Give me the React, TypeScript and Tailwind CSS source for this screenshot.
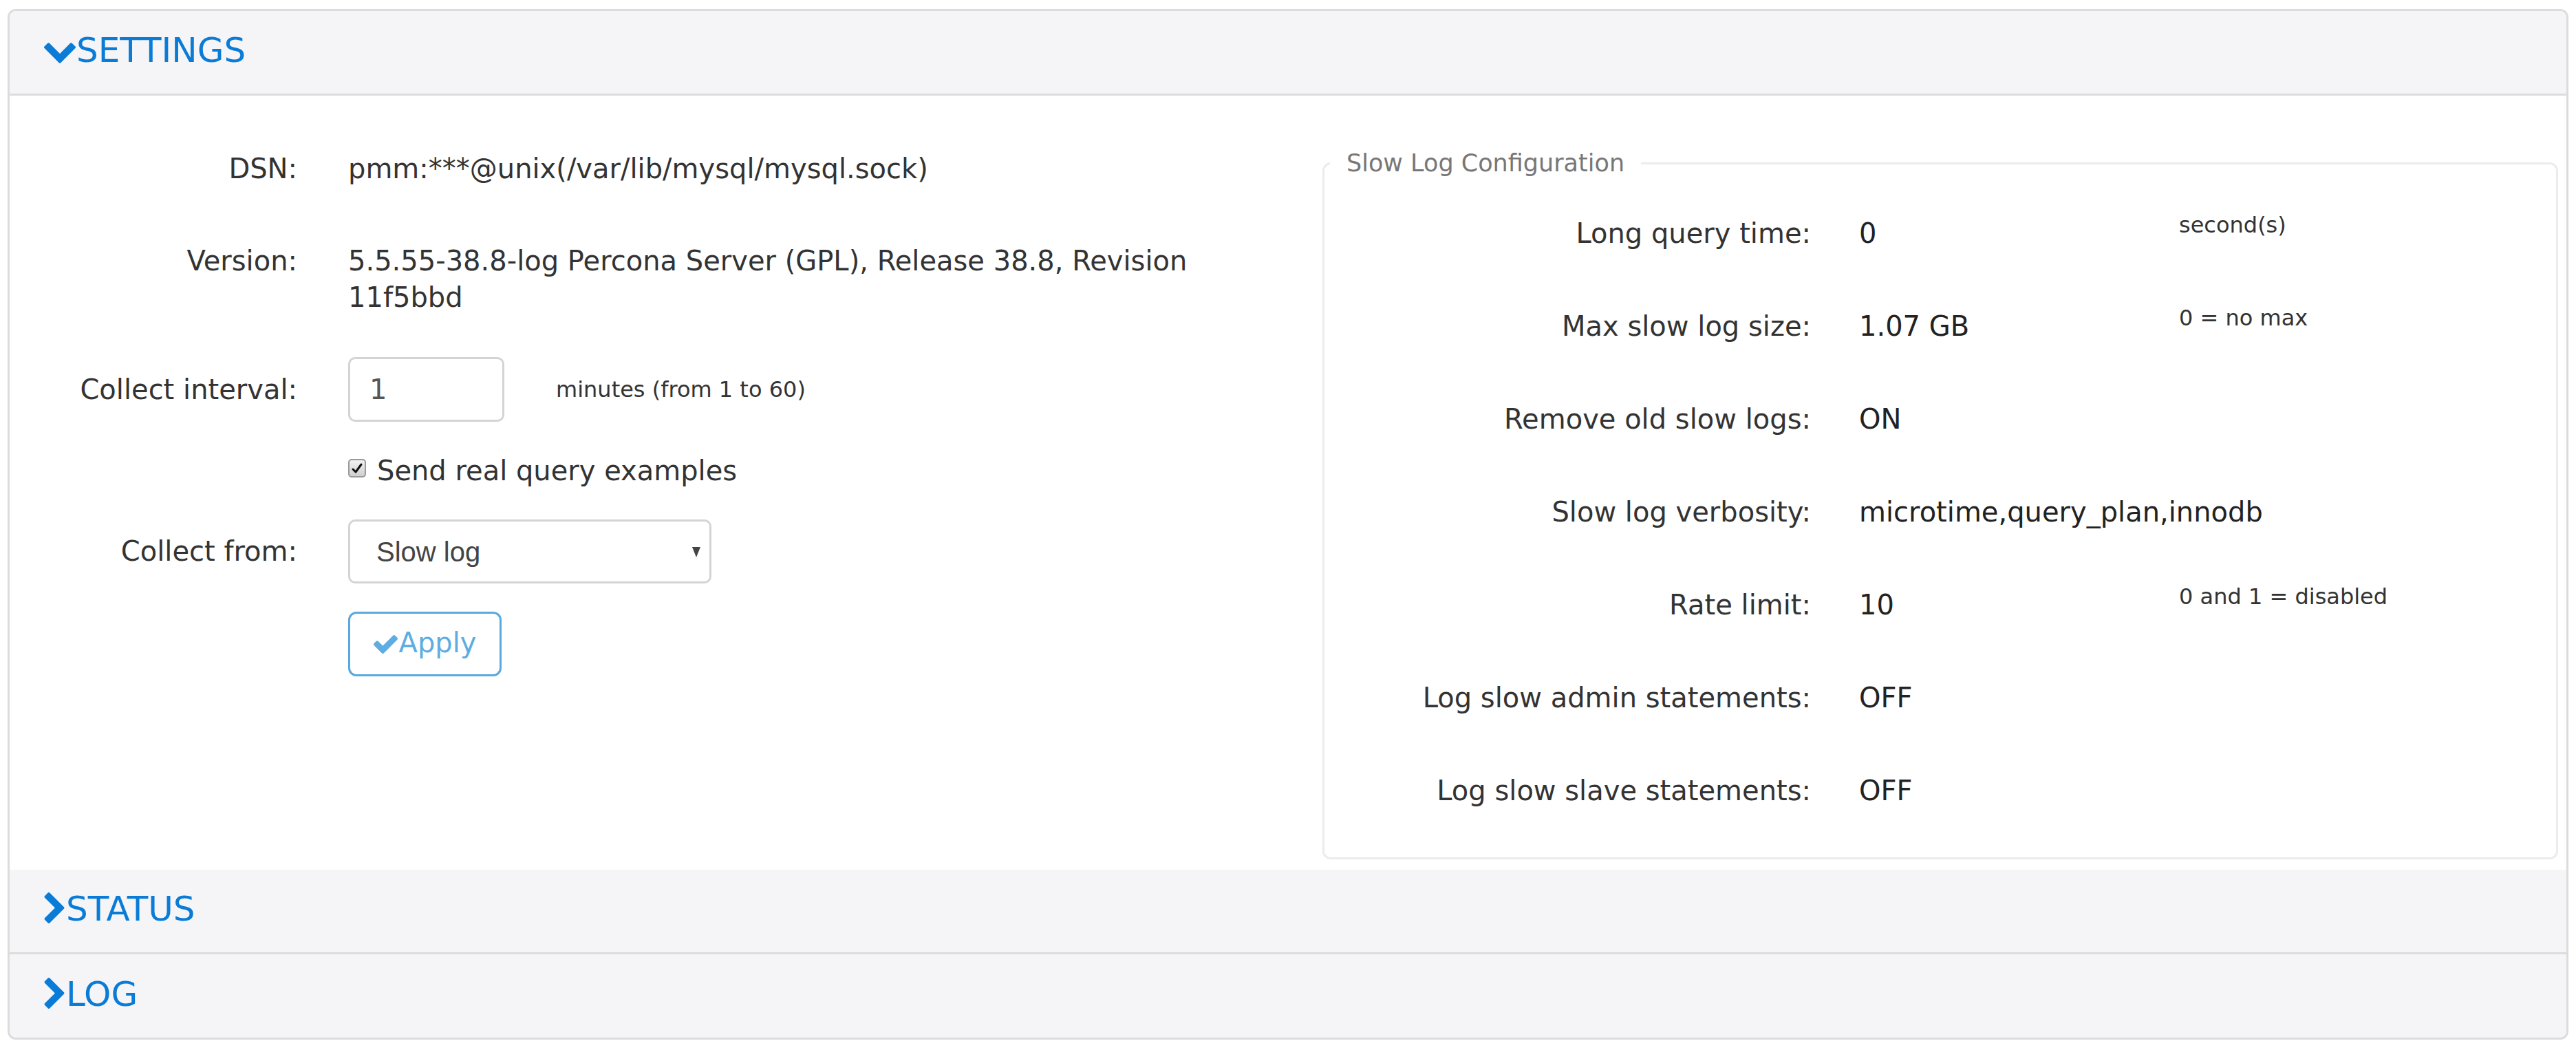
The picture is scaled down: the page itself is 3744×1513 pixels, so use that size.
import React from 'react';

interface SlowLogRow {
  label: string;
  value: string;
  hint?: string;
}

const slowLogRows: SlowLogRow[] = [
  { label: 'Long query time:', value: '0', hint: 'second(s)' },
  { label: 'Max slow log size:', value: '1.07 GB', hint: '0 = no max' },
  { label: 'Remove old slow logs:', value: 'ON' },
  { label: 'Slow log verbosity:', value: 'microtime,query_plan,innodb' },
  { label: 'Rate limit:', value: '10', hint: '0 and 1 = disabled' },
  { label: 'Log slow admin statements:', value: 'OFF' },
  { label: 'Log slow slave statements:', value: 'OFF' },
];

// font awesome 4 glyphs, cropped to their bounds
const ChevronDown = () => (
  <svg viewBox="90 533 1612 1035" className="w-[46px] h-[30px] fill-[#0a7bd6] mt-[2px]">
    <path d="M1683 808l-742 741q-19 19-45 19t-45-19l-742-741q-19-19-19-45.5t19-45.5l166-165q19-19 45-19t45 19l531 531 531-531q19-19 45-19t45 19l166 165q19 19 19 45.5t-19 45.5z" />
  </svg>
);

const ChevronRight = () => (
  <svg viewBox="346 26 1036 1612" className="w-[30px] h-[45px] fill-[#0a7bd6] mb-[9px]">
    <path d="M1363 877l-742 742q-19 19-45 19t-45-19l-166-166q-19-19-19-45t19-45l531-531-531-531q-19-19-19-45t19-45l166-166q19-19 45-19t45 19l742 742q19 19 19 45t-19 45z" />
  </svg>
);

const CheckIcon = () => (
  <svg viewBox="121 334 1550 1188" className="w-[35px] h-[27px] fill-[#5dade2]">
    <path d="M1671 566q0 40-28 68l-724 724-136 136q-28 28-68 28t-68-28l-136-136-362-362q-28-28-28-68t28-68l136-136q28-28 68-28t68 28l294 295 656-657q28-28 68-28t68 28l136 136q28 28 28 68z" />
  </svg>
);

const PanelHeading: React.FC<{ title: string; open?: boolean; last?: boolean }> = ({ title, open, last }) => (
  <div
    className={`flex items-center bg-[#f5f5f7] pl-[50px] ${
      last ? 'h-[121px]' : 'h-[123px] border-b-[3px] border-[#dcdcdc]'
    }`}
  >
    {open ? <ChevronDown /> : <ChevronRight />}
    <span className={`text-[50px] leading-[58px] text-[#0a7bd6] mb-[6px] ${open ? 'ml-[1px]' : 'ml-[2px]'}`}>
      {title}
    </span>
  </div>
);

const LeftColumn = () => (
  <div className="flex-1 min-w-0 flex flex-col pt-[80px] text-[40px]">
    {/* DSN */}
    <div className="flex items-start">
      <div className="w-[418px] shrink-0 text-right leading-[53px]">DSN:</div>
      <div className="ml-[74px] leading-[53px]">pmm:***@unix(/var/lib/mysql/mysql.sock)</div>
    </div>

    {/* Version */}
    <div className="flex items-start mt-[81px]">
      <div className="w-[418px] shrink-0 text-right leading-[53px]">Version:</div>
      <div className="ml-[74px] w-[1300px] leading-[53px]">
        5.5.55-38.8-log Percona Server (GPL), Release 38.8, Revision 11f5bbd
      </div>
    </div>

    {/* Collect interval */}
    <div className="flex items-center mt-[60px]">
      <div className="w-[418px] shrink-0 text-right leading-[53px]">Collect interval:</div>
      <div className="ml-[74px] w-[227px] h-[94px] flex items-center pl-[28px] border-[3px] border-[#d4d4d4] rounded-[10px] text-[#555]">
        1
      </div>
      <div className="ml-[75px] text-[32px] leading-[37px]">minutes (from 1 to 60)</div>
    </div>

    {/* Send real query examples */}
    <div className="flex items-center mt-[45px] ml-[492px]">
      <span className="w-[26px] h-[27px] -mt-[8px] flex items-center justify-center rounded-[5px] border-2 border-[#9a9a9a] bg-gradient-to-b from-[#f2f2f2] to-[#cfcfcf]">
        <svg viewBox="0 0 16 16" className="w-[16px] h-[16px]">
          <path d="M2 9 L6 13 L14 2" fill="none" stroke="#111" strokeWidth="3" strokeLinecap="round" strokeLinejoin="round" />
        </svg>
      </span>
      <span className="ml-[16px] leading-[53px]">Send real query examples</span>
    </div>

    {/* Collect from */}
    <div className="flex items-center mt-[44px]">
      <div className="w-[418px] shrink-0 text-right leading-[53px]">Collect from:</div>
      <div className="ml-[74px] w-[528px] h-[93px] flex items-center justify-between pl-[38px] pr-[12px] border-[3px] border-[#d4d4d4] rounded-[10px] font-['Liberation_Sans',Arial,sans-serif] text-[#444]">
        <span>Slow log</span>
        <svg viewBox="0 0 14 16" className="w-[14px] h-[16px] fill-[#444]">
          <path d="M1 1 L13 1 L7 16 Z" />
        </svg>
      </div>
    </div>

    {/* Apply */}
    <div className="flex mt-[41px] ml-[492px]">
      <button className="w-[223px] h-[94px] flex items-center justify-center gap-[2px] border-[3px] border-[#5aa8df] rounded-[12px] bg-white text-[#5dade2]">
        <CheckIcon />
        <span className="leading-[53px] mb-[4px]">Apply</span>
      </button>
    </div>
  </div>
);

const SlowLogFieldset = () => (
  <fieldset className="w-[1796px] shrink-0 self-start mt-[78px] mr-[12px] min-w-0 p-0 border-[3px] border-[#ececec] rounded-[12px]">
    <legend className="ml-[8px] px-[24px] text-[35px] leading-[40px] text-[#777]">Slow Log Configuration</legend>
    <div className="flex flex-col gap-[82px] pt-[56px] pb-[70px] text-[40px]">
      {slowLogRows.map((row) => (
        <div key={row.label} className="flex items-start">
          <div className="w-[707px] shrink-0 text-right leading-[53px]">{row.label}</div>
          <div className="ml-[70px] w-[465px] shrink-0 leading-[53px] text-[#222]">{row.value}</div>
          {row.hint && <div className="-mt-[4px] text-[32px] leading-[37px]">{row.hint}</div>}
        </div>
      ))}
    </div>
  </fieldset>
);

export default function App() {
  return (
    <div className="min-h-[1513px] bg-white px-[11px] pt-[13px] font-['DejaVu_Sans',sans-serif] text-[#333]">
      <div className="rounded-[12px] border-[3px] border-[#dcdcdc] overflow-hidden">
        <PanelHeading title="SETTINGS" open />
        <div className="flex h-[1125px] bg-white">
          <LeftColumn />
          <SlowLogFieldset />
        </div>
        <PanelHeading title="STATUS" />
        <PanelHeading title="LOG" last />
      </div>
    </div>
  );
}
